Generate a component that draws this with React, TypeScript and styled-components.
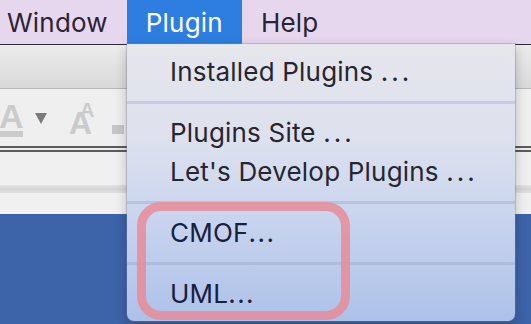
import React from "react";
import styled, { createGlobalStyle } from "styled-components";

const Global = createGlobalStyle`
  html, body { margin: 0; padding: 0; }
  body {
    width: 531px;
    height: 324px;
    overflow: hidden;
    font-family: Inter, "Noto Sans", "Liberation Sans", sans-serif;
    background: #3d63a8;
  }
`;

const Screen = styled.div`
  position: relative;
  width: 531px;
  height: 324px;
  overflow: hidden;
  display: flex;
  flex-direction: column;
`;

const MenuBar = styled.div`
  height: 44px;
  flex: none;
  background: #e6d7ef;
  display: flex;
  align-items: stretch;
  margin-left: -12px;
`;

const BarItem = styled.div<{ $active?: boolean }>`
  display: flex;
  align-items: center;
  padding: 0 19px;
  font-size: 26px;
  letter-spacing: 0.2px;
  color: ${(p) => (p.$active ? "#ffffff" : "#2b2333")};
  background: ${(p) => (p.$active ? "#2d7ee0" : "transparent")};
`;

const Window = styled.div`
  flex: 1;
  display: flex;
  flex-direction: column;
`;

const TitleStrip = styled.div`
  height: 43px;
  border-top: 1px solid #2c2a35;
  border-bottom: 1px solid #b7b7b7;
  background: linear-gradient(#ececec, #d9d9d9);
`;

const ToolRow = styled.div`
  height: 57px;
  background: #efefef;
  display: flex;
  align-items: flex-end;
  padding-bottom: 11px;
  box-sizing: border-box;
`;

const DoubleRule = styled.div`
  height: 2px;
  background: #5c5c5c;
  border-bottom: 2px solid #ececec;
  box-shadow: 0 4px 0 #5c5c5c;
  margin-bottom: 2px;
`;

const PlainRow = styled.div<{ $h: number }>`
  height: ${(p) => p.$h}px;
  background: #f0f0f0;
`;

const Band = styled.div`
  height: 8px;
  background: linear-gradient(#e2e2e2, #d5d5d5 50%, #e0e0e0);
`;

const Desk = styled.div`
  flex: 1;
  background: #3d63a8;
`;

const FontA = styled.span`
  width: 24px;
  margin-left: -1px;
  font-family: "Liberation Sans", Arial, sans-serif;
  font-size: 34px;
  font-weight: 700;
  line-height: 30px;
  color: #cbcbcb;
  border-bottom: 6px solid #cbcbcb;
  text-align: center;
  height: 30px;
  margin-bottom: -2px;
`;

const Caret = styled.div`
  width: 0;
  height: 0;
  border-left: 6px solid transparent;
  border-right: 6px solid transparent;
  border-top: 11px solid #7b7b7b;
  margin: 0 0 11px 12px;
`;

const GrowA = styled.span`
  margin-left: 22px;
  display: flex;
  align-items: flex-start;
  font-family: "Liberation Sans", Arial, sans-serif;
  font-weight: 700;
  color: #cbcbcb;
  height: 33px;
  font-size: 32px;
  line-height: 24px;
  padding-top: 9px;
  box-sizing: border-box;

  &::after {
    content: "A";
    font-size: 20px;
    line-height: 16px;
    margin-left: -12px;
    margin-top: -9px;
  }
`;

const Dash = styled.div`
  width: 12px;
  height: 9px;
  background: #c6c6c6;
  margin-left: 17px;
  margin-bottom: 1px;
`;

const Menu = styled.div`
  position: absolute;
  left: 127px;
  top: 44px;
  width: 388px;
  height: 277px;
  box-sizing: border-box;
  padding-top: 8px;
  border-radius: 0 0 7px 7px;
  background: linear-gradient(#e6e6ec 0%, #dde1ee 35%, #c7d3ee 65%, #adc1e9 100%);
  box-shadow: 0 0 0 1px rgba(120, 130, 160, 0.35), 0 4px 12px rgba(0, 0, 0, 0.25);
  display: flex;
  flex-direction: column;
`;

const Item = styled.div<{ $dark?: boolean }>`
  height: 39px;
  line-height: 39px;
  padding-left: 43px;
  font-size: 26px;
  letter-spacing: 0.2px;
  color: ${(p) => (p.$dark ? "#16213d" : "#26262e")};
  white-space: nowrap;
`;

const Dots = styled.span<{ $tight?: boolean }>`
  letter-spacing: ${(p) => (p.$tight ? "1.5px" : "3px")};
`;

const Sep = styled.div`
  height: 3px;
  margin: 9.5px 0;
  background: rgba(150, 160, 185, 0.35);
`;

const Annotation = styled.div`
  position: absolute;
  left: 137px;
  top: 202px;
  width: 213px;
  height: 118px;
  box-sizing: border-box;
  border: 9px solid rgba(232, 140, 150, 0.85);
  border-radius: 24px;
`;

export default function App() {
  return (
    <>
      <Global />
      <Screen>
        <MenuBar>
          <BarItem>Window</BarItem>
          <BarItem $active>Plugin</BarItem>
          <BarItem>Help</BarItem>
        </MenuBar>
        <Window>
          <TitleStrip />
          <ToolRow>
            <FontA>A</FontA>
            <Caret />
            <GrowA>A</GrowA>
            <Dash />
          </ToolRow>
          <DoubleRule />
          <PlainRow $h={33} />
          <Band />
          <PlainRow $h={21} />
          <Desk />
        </Window>
        <Menu>
          <Item>Installed Plugins <Dots>...</Dots></Item>
          <Sep />
          <Item>Plugins Site <Dots>...</Dots></Item>
          <Item>Let's Develop Plugins <Dots>...</Dots></Item>
          <Sep />
          <Item $dark>CMOF<Dots $tight>...</Dots></Item>
          <Sep />
          <Item $dark>UML<Dots $tight>...</Dots></Item>
        </Menu>
        <Annotation />
      </Screen>
    </>
  );
}
